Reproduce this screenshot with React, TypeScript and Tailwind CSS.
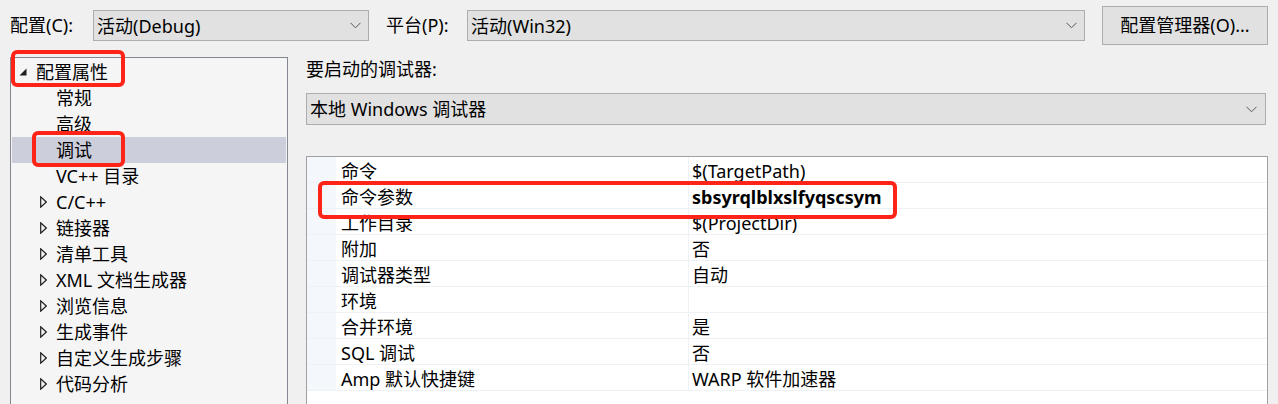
import React from "react";

const font = { fontFamily: '"Noto Sans", "Noto Sans CJK SC", sans-serif' };

type TreeItem = { label: string; level: 0 | 1; kind: "open" | "closed" | "leaf"; selected?: boolean };

const tree: TreeItem[] = [
  { label: "配置属性", level: 0, kind: "open" },
  { label: "常规", level: 1, kind: "leaf" },
  { label: "高级", level: 1, kind: "leaf" },
  { label: "调试", level: 1, kind: "leaf", selected: true },
  { label: "VC++ 目录", level: 1, kind: "leaf" },
  { label: "C/C++", level: 1, kind: "closed" },
  { label: "链接器", level: 1, kind: "closed" },
  { label: "清单工具", level: 1, kind: "closed" },
  { label: "XML 文档生成器", level: 1, kind: "closed" },
  { label: "浏览信息", level: 1, kind: "closed" },
  { label: "生成事件", level: 1, kind: "closed" },
  { label: "自定义生成步骤", level: 1, kind: "closed" },
  { label: "代码分析", level: 1, kind: "closed" },
];

const props: { name: string; value: string; bold?: boolean }[] = [
  { name: "命令", value: "$(TargetPath)" },
  { name: "命令参数", value: "sbsyrqlblxslfyqscsym", bold: true },
  { name: "工作目录", value: "$(ProjectDir)" },
  { name: "附加", value: "否" },
  { name: "调试器类型", value: "自动" },
  { name: "环境", value: "" },
  { name: "合并环境", value: "是" },
  { name: "SQL 调试", value: "否" },
  { name: "Amp 默认快捷键", value: "WARP 软件加速器" },
];

function Chevron() {
  return (
    <svg width="11" height="7" viewBox="0 0 11 7" fill="none" className="shrink-0">
      <path d="M0.5 0.8L5.5 5.8L10.5 0.8" stroke="#555" strokeWidth="1" />
    </svg>
  );
}

function Combo({ text, className }: { text: string; className: string }) {
  return (
    <div
      className={`flex h-[31px] items-center justify-between border border-[#adadad] bg-[#e1e1e1] pl-[3px] pr-[7px] text-[18px] text-black ${className}`}
    >
      <span className="leading-none">{text}</span>
      <Chevron />
    </div>
  );
}

function RedBox({ className }: { className: string }) {
  return <div className={`pointer-events-none absolute rounded-[6px] border-[4px] border-[#fe2418] ${className}`} />;
}

export default function App() {
  return (
    <div className="relative h-[404px] w-[1278px] overflow-hidden bg-[#f0f0f0] text-black" style={font}>
      {/* top bar */}
      <div className="flex h-[39px] items-center pl-[10px] pt-0 mt-[6px] text-[18px]">
        <span className="w-[83px]">配置(C):</span>
        <Combo text="活动(Debug)" className="w-[276px]" />
        <span className="ml-[17px] w-[81px]">平台(P):</span>
        <Combo text="活动(Win32)" className="w-[618px]" />
        <button className="ml-[17px] flex h-[39px] w-[166px] items-center justify-center border border-[#adadad] bg-[#e1e1e1] text-[18px]">
          配置管理器(O)...
        </button>
      </div>

      <div className="mt-[12px] flex">
        {/* tree */}
        <div className="ml-[10px] h-[360px] w-[278px] shrink-0 border border-[#828790] bg-[#f5f5f5] px-[1px] pt-[1px]">
          {tree.map((t) => (
            <div
              key={t.label}
              className={`flex h-[26px] items-center text-[18px] leading-[26px] ${t.selected ? "bg-[#cccedb]" : ""}`}
            >
              {t.level === 0 ? (
                <>
                  <svg width="8" height="8" viewBox="0 0 8 8" className="ml-[7px] mr-[9px] shrink-0">
                    <path d="M7.5 0.5V7.5H0.5Z" fill="#1e1e1e" />
                  </svg>
                  <span>{t.label}</span>
                </>
              ) : (
                <>
                  <span className="ml-[28px] flex w-[16px] shrink-0 items-center">
                    {t.kind === "closed" && (
                      <svg width="7" height="12" viewBox="0 0 7 12">
                        <path d="M0.7 0.8V11.2L6.3 6Z" fill="none" stroke="#1e1e1e" strokeWidth="1.2" />
                      </svg>
                    )}
                  </span>
                  <span>{t.label}</span>
                </>
              )}
            </div>
          ))}
        </div>

        {/* right side */}
        <div className="ml-[18px] flex w-[962px] flex-col">
          <div className="-mt-[1px] h-[26px] text-[18px] leading-[26px]">要启动的调试器:</div>
          <Combo text="本地 Windows 调试器" className="mt-[11px] h-[32px] w-[960px] !pr-[8px]" />
          <div className="mt-[31px] h-[260px] border border-[#a0a0a0] bg-white">
            {props.map((p) => (
              <div key={p.name} className="flex h-[26px] border-b border-[#eef1f6] text-[18px] leading-[25px]">
                <div className="w-[29px] shrink-0 bg-[#f4f7fc]" />
                <div className="w-[353px] shrink-0 border-r border-[#eef1f6] pl-[5px] pt-[2px]">{p.name}</div>
                <div className={`pl-[3px] pt-[2px] ${p.bold ? "font-bold" : ""}`}>{p.value}</div>
              </div>
            ))}
          </div>
        </div>
      </div>

      {/* annotations */}
      <RedBox className="left-[11px] top-[50px] h-[37px] w-[114px]" />
      <RedBox className="left-[32px] top-[131px] h-[36px] w-[93px]" />
      <RedBox className="left-[318px] top-[181px] h-[38px] w-[579px]" />
    </div>
  );
}
